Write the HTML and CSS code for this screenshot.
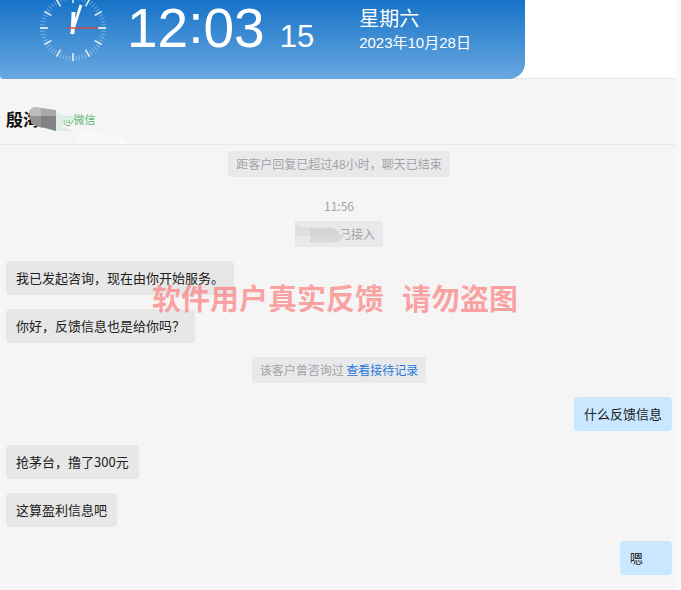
FILE: index.html
```
<!DOCTYPE html>
<html lang="zh-CN">
<head>
<meta charset="utf-8">
<title>客服会话</title>
<link rel="stylesheet" href="styles.css">
</head>
<body>
<div class="app">
  <header class="topbar">
    <section class="clock-card">
      <svg class="dial" viewBox="-33 -33 66 66" aria-hidden="true">
        <circle class="ticks" r="30.5" pathLength="600"/>
        <g class="marks">
          <path d="M0-33V-25M0 33V25M-33 0H-25M33 0H25"/>
          <path transform="rotate(30)" d="M0-33V-25M0 33V25M-33 0H-25M33 0H25"/>
          <path transform="rotate(60)" d="M0-33V-25M0 33V25M-33 0H-25M33 0H25"/>
        </g>
        <path class="hour" d="M-.5 6L.5-16"/>
        <path class="minute" d="M-1.5 6L8-23"/>
        <path class="second" d="M-6 0H25"/>
      </svg>
      <time class="time">12<span class="colon">:</span>03</time>
      <span class="seconds">15</span>
      <div class="date">
        <span class="weekday">星期六</span>
        <span class="day">2023年10月28日</span>
      </div>
    </section>
  </header>
  <div class="contact">
    <h1 class="name">殷海</h1>
    <span class="source">@微信</span>
    <svg class="mosaic" viewBox="0 0 98 44" aria-hidden="true">
      <path fill="#f7f9fb" d="M48 30L60 28L98 36V41H50Z"/>
      <path fill="#bcbcbd" d="M1 9Q3 4 8 4L14 5V13H2Z"/>
      <path fill="#a9a9ab" d="M13 5L28 7V14H13Z"/>
      <path fill="#929294" d="M1 13H14V25L4 21Z"/>
      <path fill="#818186" d="M13 13H28V28L13 24Z"/>
      <path fill="#deeee4" d="M28 10L39 13L46 14V17H35V23L45 28H28Z"/>
    </svg>
  </div>
  <main class="chat">
    <p class="notice">距客户回复已超过48小时，聊天已结束</p>
    <time class="stamp">11:56</time>
    <p class="notice joined">
      <span>客服已接入</span>
      <svg class="smudge" viewBox="0 0 54 26" aria-hidden="true">
        <path fill="#e9e9eb" d="M0 0H46V8L49 17L53 20V26H0Z"/>
        <path fill="#dfdfe1" d="M0 2L6 6L38 7L44 10V15H0Z"/>
        <path fill="#d5d5d7" d="M15 7H38L44 11V15H15Z"/>
        <path fill="#dadadd" d="M15 14H50L44 20L30 22L15 21Z"/>
      </svg>
    </p>
    <p class="bubble">我已发起咨询，现在由你开始服务。</p>
    <p class="bubble">你好，反馈信息也是给你吗？</p>
    <p class="notice">该客户曾咨询过 <a href="#records">查看接待记录</a></p>
    <p class="bubble mine">什么反馈信息</p>
    <p class="bubble">抢茅台，撸了300元</p>
    <p class="bubble">这算盈利信息吧</p>
    <p class="bubble mine">嗯</p>
  </main>
  <div class="watermark"><span>软件用户真实反馈</span><span>请勿盗图</span></div>
</div>
</body>
</html>
```
FILE: styles.css
```
* {
  box-sizing: border-box;
}

body {
  margin: 0;
  background: #f9f9f9;
  font-family: "Noto Sans CJK SC", sans-serif;
}

h1,
p {
  margin: 0;
}

.app {
  position: relative;
  margin-right: 5px;
  min-height: 100vh;
  background: #f5f5f5;
}

.topbar {
  background: #fff;
  border-bottom: 1px solid #e6e6e8;
}

.clock-card {
  display: flex;
  align-items: flex-start;
  width: 525px;
  height: 79px;
  padding-left: 40px;
  margin-bottom: -1px;
  border-radius: 0 0 16px 4px;
  background: linear-gradient(#1773c7, #69a8e1);
  color: #fff;
  font-family: "Liberation Sans", "Noto Sans CJK SC", sans-serif;
}

.dial {
  width: 66px;
  height: 66px;
  margin-top: -5px;
  fill: none;
  stroke: #fff;
}

.ticks {
  stroke-width: 5;
  stroke-dasharray: 3 7;
  stroke-dashoffset: 1.5;
  opacity: 0.35;
}

.marks {
  stroke-width: 1.8;
  opacity: 0.75;
}

.hour {
  stroke-width: 3.8;
}

.minute {
  stroke-width: 2.8;
}

.second {
  stroke: #e04347;
  stroke-width: 1.4;
}

.time {
  margin-left: 21px;
  font-size: 55px;
  line-height: 56px;
}

.colon {
  vertical-align: 4px;
  line-height: 1px;
}

.seconds {
  margin: 19px 0 0 15px;
  font-size: 31px;
  line-height: 36px;
}

.date {
  display: flex;
  flex-direction: column;
  margin: 7px 0 0 45px;
}

.weekday {
  font-size: 20px;
  line-height: 24px;
}

.day {
  font-size: 15px;
  line-height: 24px;
}

.contact {
  position: relative;
  display: flex;
  align-items: center;
  height: 66px;
  padding: 14px 6px 0;
  border-bottom: 1px solid #e9e9ea;
}

.name {
  width: 57px;
  font-size: 17px;
  line-height: 24px;
  color: #111;
}

.source {
  font-size: 11px;
  line-height: 16px;
  color: #5db673;
}

.mosaic {
  position: absolute;
  left: 28px;
  top: 24px;
  width: 98px;
  height: 44px;
}

.chat {
  display: flex;
  flex-direction: column;
  align-items: flex-start;
  gap: 14px;
  padding: 6px 4px 16px 6px;
}

.notice {
  position: relative;
  align-self: center;
  padding: 4px 8px;
  border-radius: 2px;
  background: #e9e9eb;
  color: #a3a3a6;
  font-size: 12px;
  line-height: 18px;
}

.notice a {
  color: #2478dc;
  text-decoration: none;
}

.smudge {
  position: absolute;
  left: 0;
  top: 0;
  width: 54px;
  height: 26px;
}

.stamp {
  align-self: center;
  margin-top: 6px;
  margin-bottom: -8px;
  color: #a3a3a6;
  font-size: 12px;
  line-height: 18px;
}

.joined {
  min-width: 88px;
  text-align: right;
}

.bubble {
  padding: 7px 10px;
  border-radius: 4px;
  background: #e7e7e7;
  color: #202020;
  font-size: 13px;
  line-height: 20px;
}

.mine {
  align-self: flex-end;
  min-width: 52px;
  background: #c9e7ff;
}

.watermark {
  position: absolute;
  left: 0;
  right: 0;
  top: 277px;
  display: flex;
  justify-content: center;
  gap: 18px;
  padding-right: 6px;
  color: rgba(255, 105, 105, 0.6);
  font-size: 29px;
  font-weight: bold;
  line-height: 40px;
  pointer-events: none;
}
```
